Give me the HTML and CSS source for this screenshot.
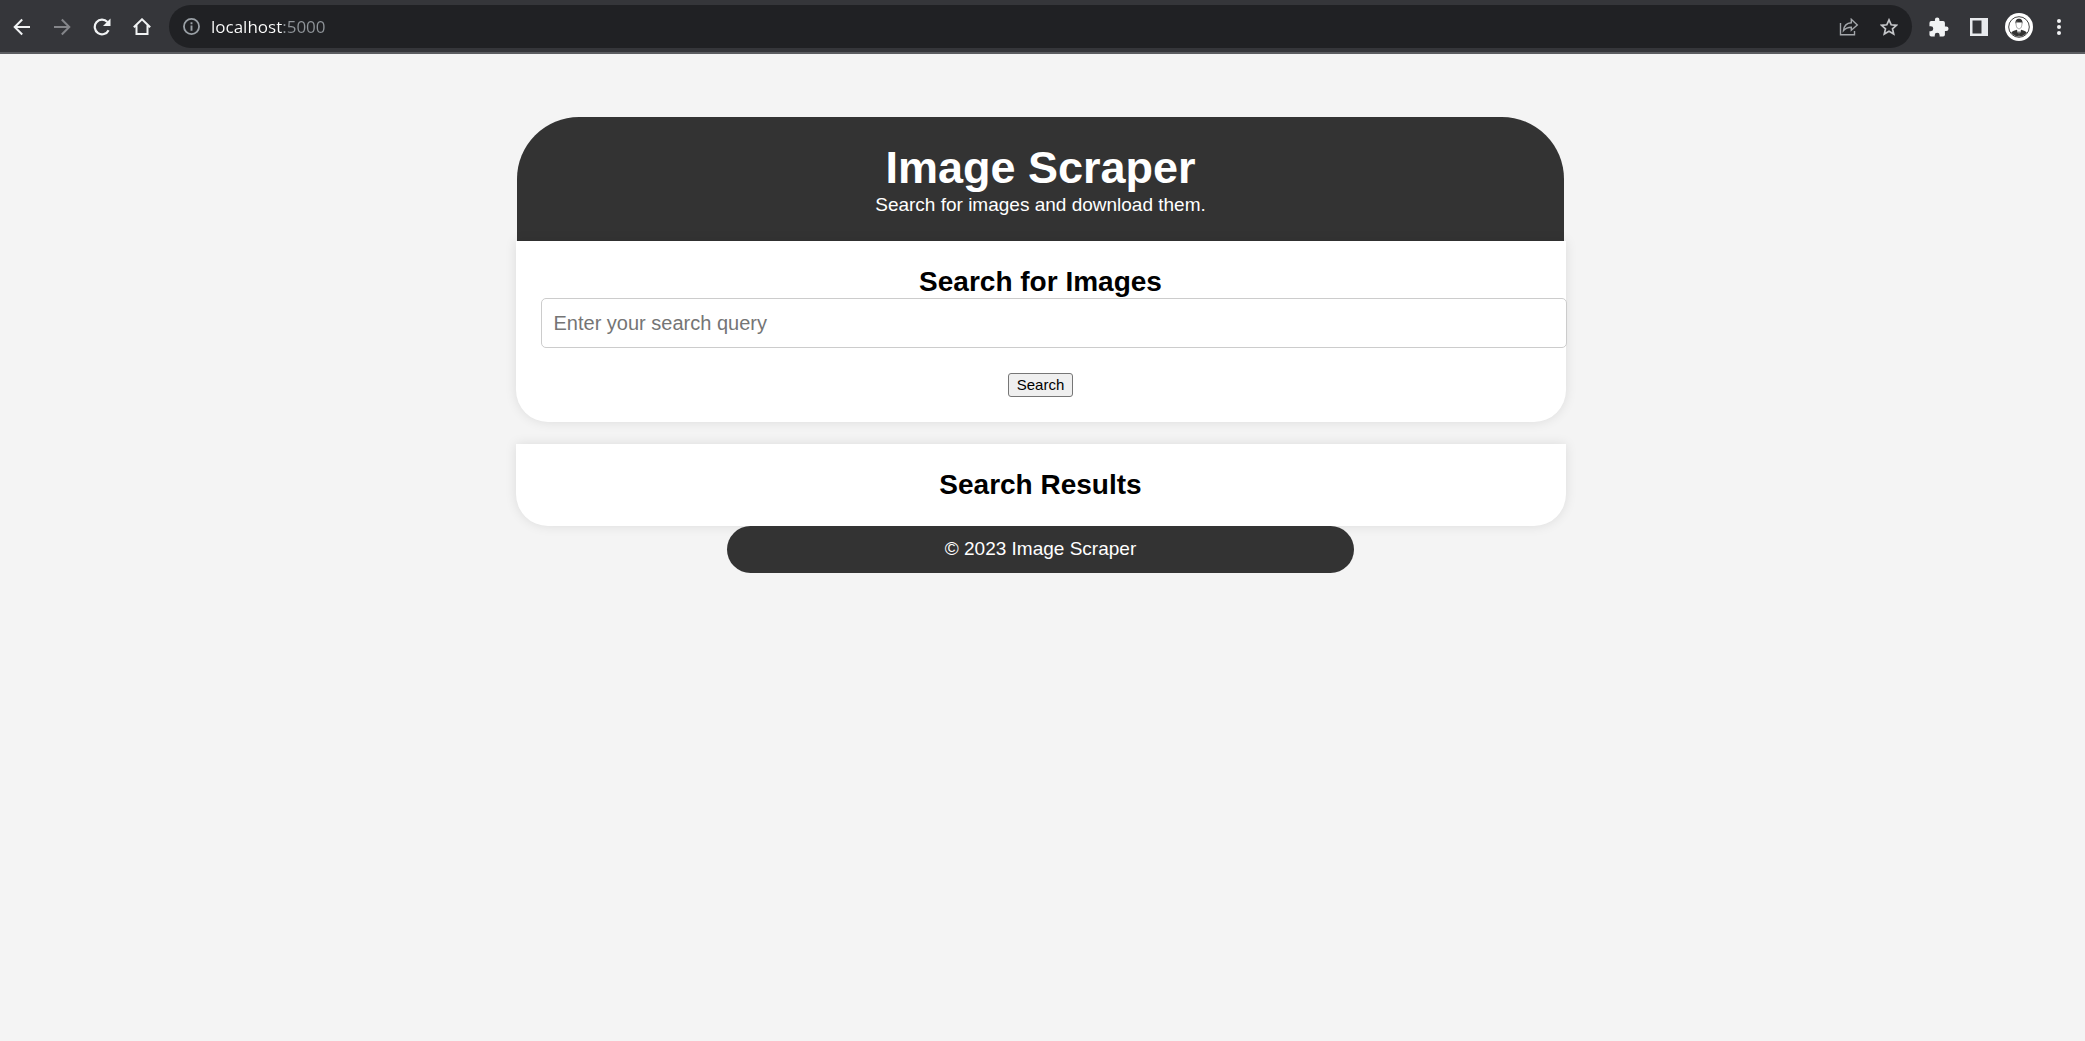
FILE: index.html
```html
<!DOCTYPE html>
<html lang="en">
<head>
<meta charset="utf-8">
<meta name="viewport" content="width=device-width, initial-scale=1">
<title>Image Scraper</title>
<link rel="stylesheet" href="styles.css">
</head>
<body>
<nav class="toolbar" aria-label="Browser toolbar">
  <button class="tool" aria-label="Back">
    <svg width="18" height="18" viewBox="0 0 18 18"><path d="M17 9H2M9.200 1.500L1.700 9l7.500 7.500" fill="none" stroke="#f1f3f4" stroke-width="2"/></svg>
  </button>
  <button class="tool" aria-label="Forward">
    <svg width="18" height="18" viewBox="0 0 18 18"><path d="M1 9h15M8.800 1.500L16.300 9l-7.500 7.500" fill="none" stroke="#85868a" stroke-width="2"/></svg>
  </button>
  <button class="tool" aria-label="Reload">
    <svg width="18" height="18" viewBox="0 0 18 18"><path d="M15.600 12.200A7.300 7.300 0 1 1 14.400 4" fill="none" stroke="#f1f3f4" stroke-width="2.200"/><path d="M17.500 0.500v7.500H10z" fill="#f1f3f4"/></svg>
  </button>
  <button class="tool" aria-label="Home">
    <svg width="18" height="18" viewBox="0 0 18 18"><path d="M0.800 9.200L9 1.300l8.200 7.900M3.500 7v9h11V7" fill="none" stroke="#f1f3f4" stroke-width="2"/></svg>
  </button>
  <div class="omnibox">
    <button class="info" aria-label="View site information">
      <svg width="17" height="17" viewBox="0 0 16 16"><circle cx="8" cy="8" r="7.100" fill="none" stroke="#9aa0a6" stroke-width="1.700"/><path d="M8 7v5M8 4v1.800" stroke="#9aa0a6" stroke-width="1.800"/></svg>
    </button>
    <input class="address" type="text" value="localhost:5000" aria-label="Address">
    <button class="tool" aria-label="Share this page">
      <svg width="20" height="18" viewBox="0 0 20 18"><path d="M1.500 5v11.700h14V13M4.500 12.500c.600-5 3.500-7.500 7.800-7.700V1.300l6 5.700-6 5.300V9.200c-3.600 0-5.800.900-7.800 3.300z" fill="none" stroke="#a4a7ab" stroke-width="1.400"/></svg>
    </button>
    <button class="tool" aria-label="Bookmark this page">
      <svg width="18" height="18" viewBox="0 0 18 18"><path d="M9 1.900l2.200 4.900 5.300.500-4 3.500 1.200 5.200L9 13.300 4.300 16l1.200-5.200-4-3.500 5.300-.500z" fill="none" stroke="#c3c5c8" stroke-width="1.700"/></svg>
    </button>
  </div>
  <button class="tool" aria-label="Extensions">
    <svg width="20" height="20" viewBox="1.500 0.500 22 22"><path d="M20.500 11H19V7a2 2 0 0 0-2-2h-4V3.500a2.500 2.500 0 0 0-5 0V5H4a2 2 0 0 0-2 2v3.800h1.500a2.700 2.700 0 0 1 0 5.400H2V20a2 2 0 0 0 2 2h3.800v-1.500a2.700 2.700 0 0 1 5.400 0V22H17a2 2 0 0 0 2-2v-4h1.500a2.500 2.500 0 0 0 0-5z" fill="#f1f3f4"/></svg>
  </button>
  <button class="tool" aria-label="Side panel">
    <svg width="18" height="18" viewBox="0 0 18 18"><path fill-rule="evenodd" d="M0 0h18v18H0zM2.500 2.500v13h9v-13z" fill="#e8eaed"/></svg>
  </button>
  <button class="tool" aria-label="Profile">
    <svg width="28" height="28" viewBox="0 0 28 28"><circle cx="14" cy="14" r="14" fill="#fff"/><circle cx="14" cy="14" r="10.300" fill="none" stroke="#444" stroke-width="1"/><path d="M6.200 19.600c1.400-1.900 3.800-2 5.600-2.800L14 19l2.200-2.200c1.800.800 4.200.900 5.600 2.800A9.400 9.400 0 0 1 14 23.600a9.400 9.400 0 0 1-7.800-4z" fill="#333"/><path d="M11.800 16.800L14 23l2.200-6.200L14 18.500z" fill="#fff"/><path d="M13.500 18.500h1l.500 3-1 1.300-1-1.300z" fill="#333"/><path d="M11 9.500c0 4.500 1.200 6.300 3 6.300s3-1.800 3-6.300z" fill="#fff" stroke="#666" stroke-width=".6"/><path d="M10.700 10.800C9.900 7.300 11.600 5.700 14 5.700s4.100 1.600 3.300 5.100l-.6-1.800c-1.900.300-3.500 0-5.300-.300z" fill="#333"/></svg>
  </button>
  <button class="tool" aria-label="Menu">
    <svg width="4" height="16" viewBox="0 0 4 16"><g fill="#f1f3f4"><circle cx="2" cy="2" r="2"/><circle cx="2" cy="8" r="2"/><circle cx="2" cy="14" r="2"/></g></svg>
  </button>
</nav>
<div class="page">
  <header class="banner">
    <h1>Image Scraper</h1>
    <p>Search for images and download them.</p>
  </header>
  <main class="content">
    <section class="card">
      <h2><label for="query">Search for Images</label></h2>
      <form class="search">
        <input class="query" id="query" type="text" placeholder="Enter your search query">
        <button class="submit" type="submit">Search</button>
      </form>
    </section>
    <section class="card">
      <h2>Search Results</h2>
    </section>
  </main>
  <footer class="footer">
    <p>© 2023 Image Scraper</p>
  </footer>
</div>
</body>
</html>
```
FILE: styles.css
```css
* {
  margin: 0;
}

body {
  background: #f4f4f4;
  color: #000;
  font: 19px/22px "Liberation Sans", Arial, sans-serif;
}

.toolbar {
  display: flex;
  align-items: center;
  padding: 5px 6px 4px 2px;
  background: #35363a;
  border-bottom: 2px solid #5c5d61;
}

.tool,
.info {
  display: flex;
  flex: none;
  align-items: center;
  justify-content: center;
  width: 40px;
  height: 42px;
  padding: 0;
  border: 0;
  background: none;
}

.omnibox {
  display: flex;
  flex: 1;
  align-items: center;
  min-width: 0;
  height: 43px;
  margin: 0 7px;
  padding: 0 3px 0 12px;
  box-sizing: border-box;
  border-radius: 22px;
  background: #202124;
}

.info {
  width: 20px;
}

/* The host is brighter than the port that follows it. */
.address {
  flex: 1;
  min-width: 0;
  height: 24px;
  margin-left: 10px;
  padding: 0;
  border: 0;
  outline: 0;
  color: #9aa0a6;
  background: linear-gradient(to right, #fff 71px, #8f9499 71px);
  background-clip: text;
  -webkit-text-fill-color: transparent;
  font: 17px/24px "Open Sans", "Noto Sans", sans-serif;
}

.page {
  display: flex;
  flex-direction: column;
  align-items: center;
  padding: 63px 4px 20px 0;
  text-align: center;
}

.banner {
  width: 100%;
  max-width: 1047px;
  padding: 25px;
  box-sizing: border-box;
  border-radius: 62px 62px 0 0;
  background: #333;
  color: #fff;
}

h1 {
  font-size: 45px;
  line-height: 52px;
}

h2 {
  font-size: 28px;
  line-height: 32px;
}

.content {
  display: flex;
  flex-direction: column;
  gap: 22px;
  width: 100%;
  max-width: 1050px;
}

.card {
  padding: 25px;
  border-radius: 0 0 32px 32px;
  background: #fff;
  box-shadow: 0 0 12px rgba(0, 0, 0, 0.1);
}

.search {
  display: flex;
  flex-direction: column;
  align-items: center;
  gap: 25px;
}

.query {
  align-self: flex-start;
  width: 100%;
  height: 24px;
  padding: 12px;
  border: 1px solid #ccc;
  border-radius: 5px;
  background: #fff;
  font: 20px/24px "Liberation Sans", Arial, sans-serif;
}

.query::placeholder {
  color: #757575;
}

.submit {
  height: 24px;
  padding: 0 8px;
  border: 1px solid #767676;
  border-radius: 3px;
  background: #efefef;
  color: #000;
  font: 15px/22px "Liberation Sans", Arial, sans-serif;
}

.footer {
  width: 100%;
  max-width: 627px;
  padding: 12px 0 13px;
  border-radius: 24px;
  background: #333;
  color: #fff;
}
```
